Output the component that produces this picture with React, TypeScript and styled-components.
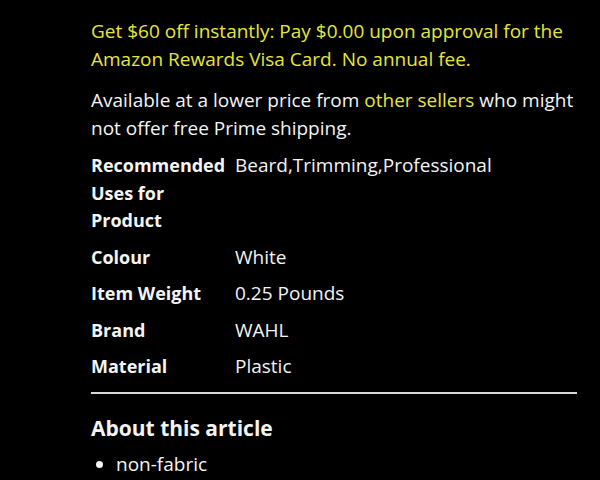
import styled, { createGlobalStyle } from 'styled-components';

const GlobalStyle = createGlobalStyle`
  html, body {
    margin: 0;
    background: #000;
  }
`;

const specs = [
  { label: 'Recommended Uses for Product', value: 'Beard,Trimming,Professional' },
  { label: 'Colour', value: 'White' },
  { label: 'Item Weight', value: '0.25 Pounds' },
  { label: 'Brand', value: 'WAHL' },
  { label: 'Material', value: 'Plastic' },
];

const App = () => {
  return (
    <>
      <GlobalStyle />
      <StyledPage>
        <Offer>
          Get $60 off instantly: Pay $0.00 upon approval for the Amazon Rewards Visa Card. No
          annual fee.
        </Offer>
        <Note>
          Available at a lower price from <Highlight>other sellers</Highlight> who might not offer
          free Prime shipping.
        </Note>
        <SpecTable>
          <tbody>
            {specs.map((spec) => (
              <SpecRow key={spec.label}>
                <SpecLabel>{spec.label}</SpecLabel>
                <SpecValue>{spec.value}</SpecValue>
              </SpecRow>
            ))}
          </tbody>
        </SpecTable>
        <Divider />
        <Heading>About this article</Heading>
        <Bullets>
          <li>non-fabric</li>
        </Bullets>
      </StyledPage>
    </>
  );
};

/**
 * styles
 */
const StyledPage = styled.div`
  width: 494px;
  padding: 17px 0 0 91px;
  color: #f4f4f4;
  font-family: 'Open Sans', 'Noto Sans', sans-serif;
  font-size: 19px;
  font-weight: 500;
  line-height: 28px;
`;

const Offer = styled.p`
  margin: 0 0 13px;
  color: #e6e63a;
`;

const Note = styled.p`
  margin: 0 0 10px;
`;

const Highlight = styled.span`
  color: #e6e63a;
`;

const SpecTable = styled.table`
  border-collapse: collapse;
  border-spacing: 0;
  table-layout: fixed;
`;

const SpecRow = styled.tr`
  td {
    padding: 0 0 9px;
    vertical-align: top;
    line-height: 27.5px;
  }
`;

const SpecLabel = styled.td`
  width: 140px;
  padding-right: 4px !important;
  font-size: 18px;
  font-weight: 700;
`;

const SpecValue = styled.td``;

const Divider = styled.hr`
  margin: 2px 8px 20px 0;
  border: 0;
  border-top: 2px solid #d8d8d8;
`;

const Heading = styled.h2`
  margin: 0 0 8px;
  font-size: 21px;
  line-height: 28px;
  font-weight: 700;
`;

const Bullets = styled.ul`
  margin: 0;
  padding-left: 25px;
`;

export default App;
